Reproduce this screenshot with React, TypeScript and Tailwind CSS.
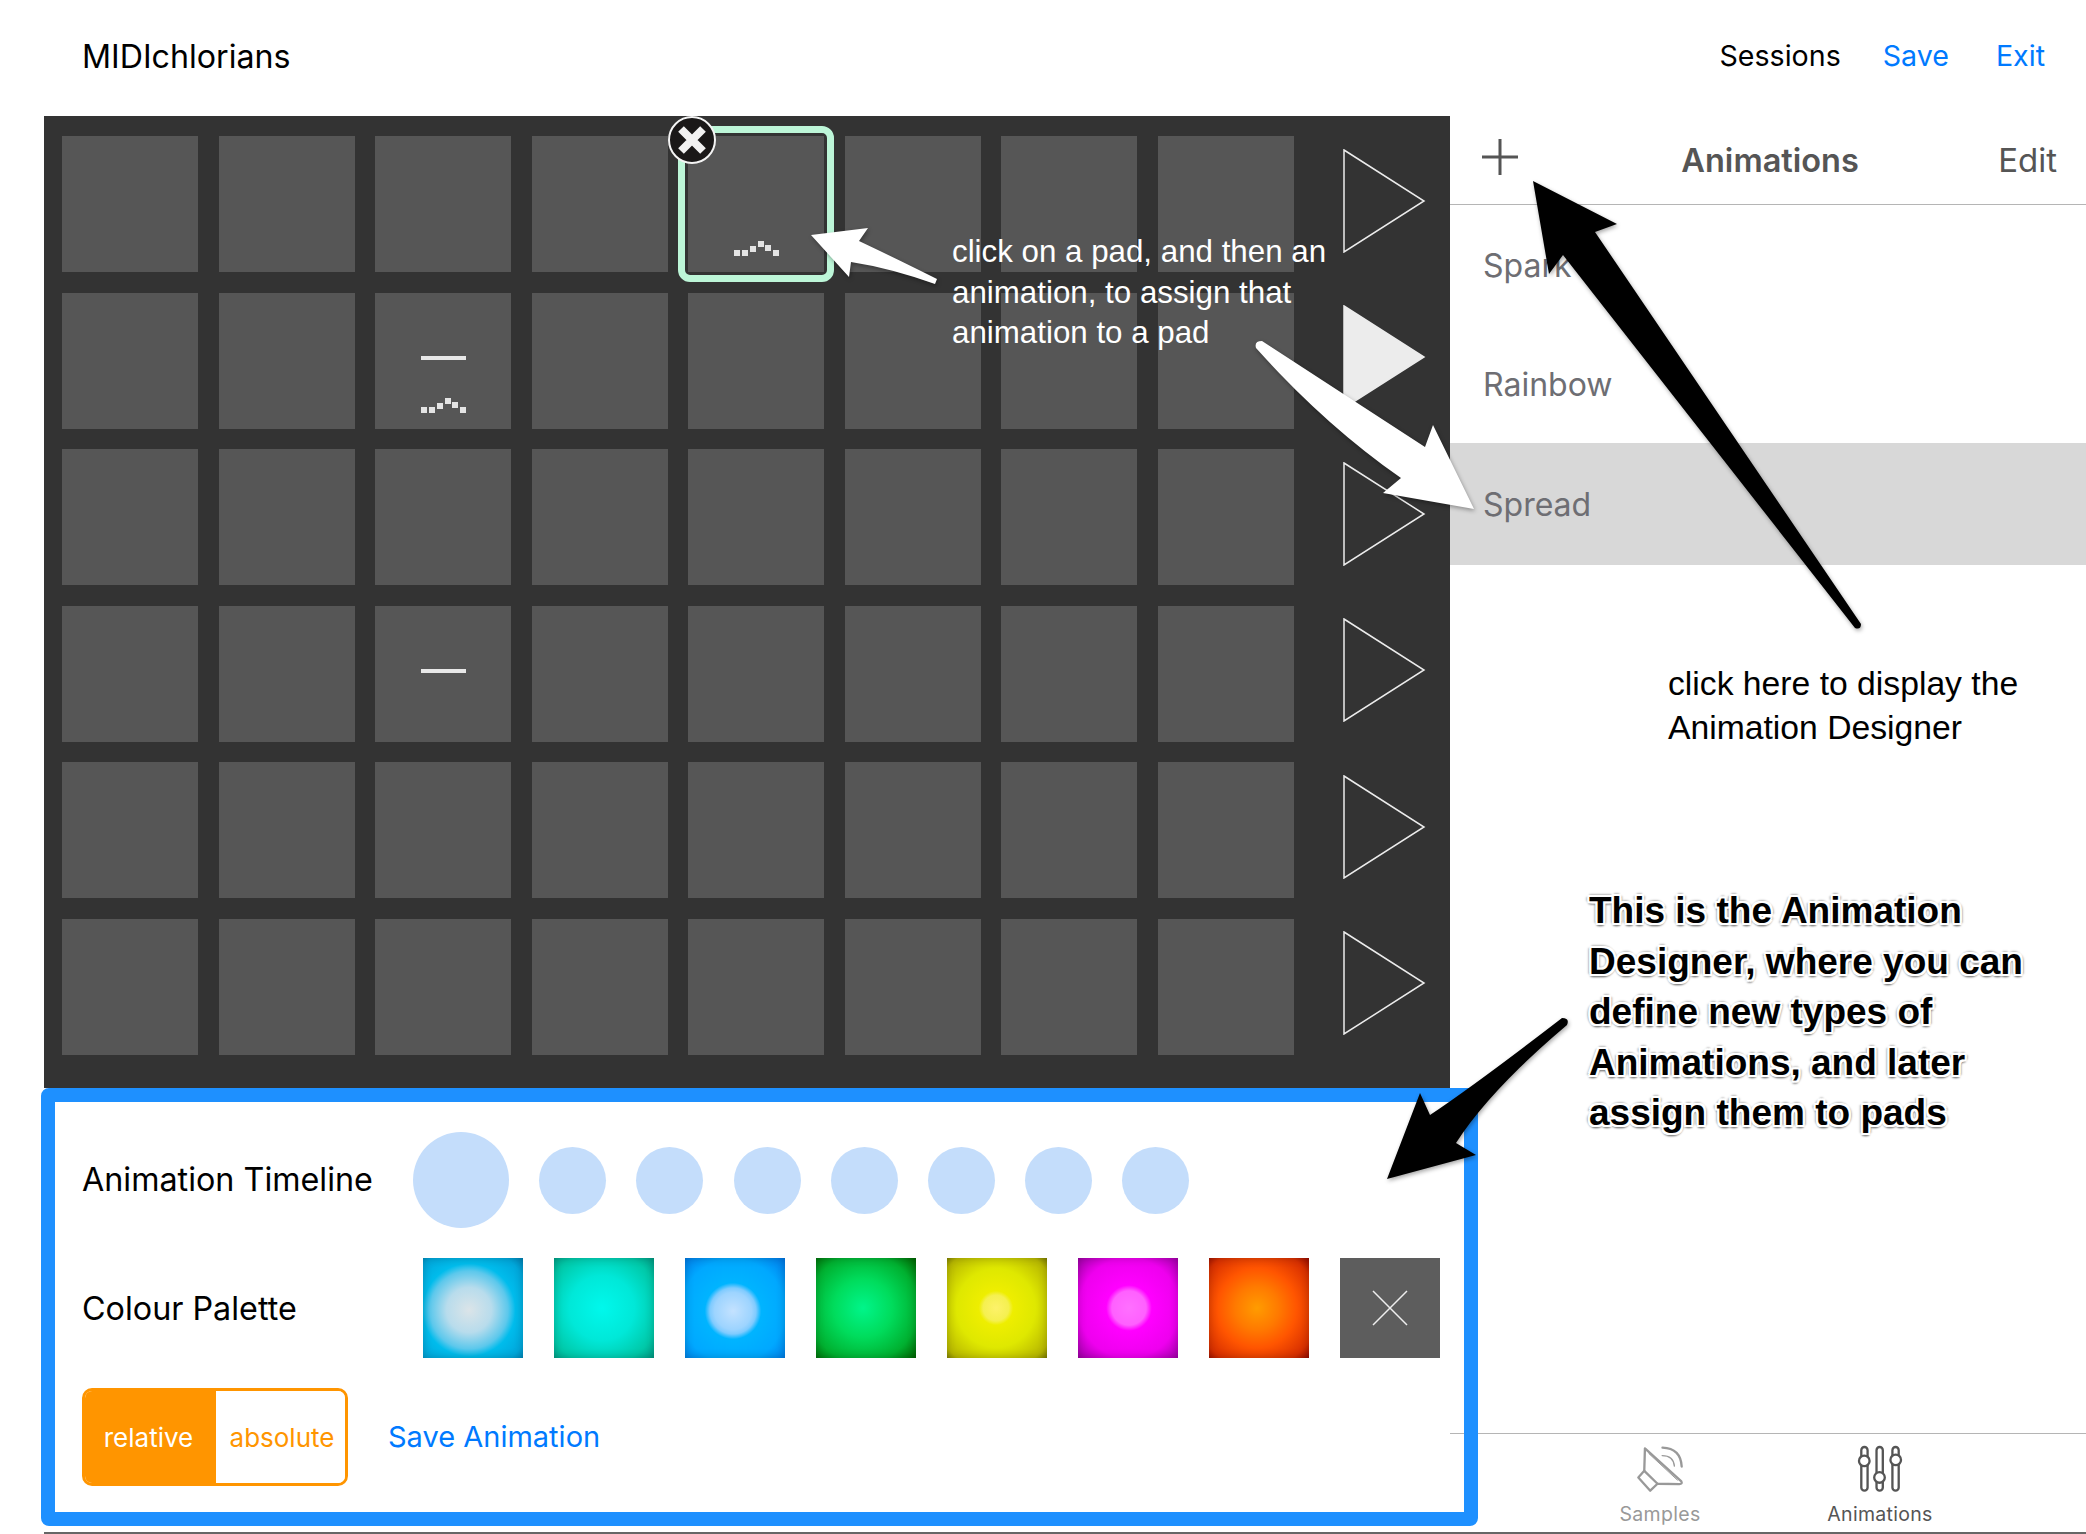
const padRows = [0, 1, 2, 3, 4, 5]
const padCols = [0, 1, 2, 3, 4, 5, 6, 7]

const swatches = [
  "bg-[radial-gradient(circle_at_46%_52%,#dbe4e8_0%,#b8dcec_30%,#5cc8ec_52%,#00bcec_62%,#00a8dc_85%,#0084b8_100%)]",
  "bg-[radial-gradient(circle_at_48%_50%,#00f8ec_0%,#00e8d8_45%,#00c8a8_80%,#009c84_100%)]",
  "bg-[radial-gradient(circle_at_48%_53%,#c4e2ff_0%,#9dd4ff_25%,#7fcbff_31%,#00b4ff_38%,#00a8ff_70%,#0078e8_100%)]",
  "bg-[radial-gradient(circle_at_47%_50%,#00f58a_0%,#00dc5c_40%,#00b030_75%,#006400_100%)]",
  "bg-[radial-gradient(circle_at_49%_50%,#fdf26a_0%,#f5f050_18%,#eeee00_24%,#dfe800_55%,#b8b800_88%,#808000_100%)]",
  "bg-[radial-gradient(circle_at_51%_50%,#ff70ff_0%,#ff60ff_24%,#ff00ff_32%,#ee00ee_70%,#a000a8_100%)]",
  "bg-[radial-gradient(circle_at_48%_50%,#ff9c00_0%,#ff7a00_30%,#ff5500_55%,#d83000_85%,#980c00_100%)]",
]

function Wave() {
  const dots = [
    [0, 9],
    [8, 9],
    [16, 5],
    [24, 0],
    [31, 4],
    [39, 9],
  ]
  return (
    <svg className="absolute left-[46px] top-[105px]" width="45" height="15" viewBox="0 0 45 15">
      {dots.map(([x, y]) => (
        <rect key={x} x={x} y={y} width="6" height="6" fill="#e4e4e4" />
      ))}
    </svg>
  )
}

function Pad({ row, col }: { row: number; col: number }) {
  const selected = row === 0 && col === 4
  const wave = selected || (row === 1 && col === 2)
  const line = col === 2 && (row === 1 || row === 3)
  return (
    <div className="relative h-[136px] w-[136px] bg-[#565656]">
      {line && <div className="absolute left-[46px] top-[63px] h-[4px] w-[45px] bg-[#e8e8e8]" />}
      {wave && <Wave />}
      {selected && (
        <>
          <div className="absolute -inset-[10px] rounded-[12px] border-[7px] border-[#bdf6d8]" />
          <svg className="absolute -left-[20px] -top-[20px]" width="48" height="48" viewBox="0 0 48 48">
            <circle cx="24" cy="24" r="23" fill="#1a1818" stroke="#f4f4f4" strokeWidth="2" />
            <path d="M13 13 L35 35 M35 13 L13 35" stroke="#f2f2f2" strokeWidth="8" />
          </svg>
        </>
      )}
    </div>
  )
}

function Trigger({ filled }: { filled: boolean }) {
  return (
    <svg className="mb-[7px] ml-[29px] self-center" width="83" height="104" viewBox="0 0 83 104">
      <path
        d="M1 1 L81 52 L1 103 Z"
        fill={filled ? "#ececec" : "none"}
        stroke="#ececec"
        strokeWidth="1.5"
      />
    </svg>
  )
}

function SamplesIcon() {
  return (
    <svg width="48" height="48" viewBox="45 40 145 145" fill="none" stroke="#999" strokeWidth="7" strokeLinejoin="round" strokeLinecap="round">
      <path d="M72 50 L182 150 Q186 158 176 158 L110 157 L70 118 Z" />
      <path d="M70 118 L52 138 L88 178 L110 157" />
      <path d="M84 66 L170 146" strokeWidth="3" />
      <path d="M125 48 Q180 50 183 105" />
      <path d="M124 72 Q158 72 161 104" strokeWidth="4" />
    </svg>
  )
}

function SlidersIcon() {
  return (
    <svg width="48" height="48" viewBox="705 40 145 145" fill="none" stroke="#555" strokeWidth="7">
      <rect x="721" y="46" width="19" height="132" rx="9.5" />
      <rect x="767" y="46" width="19" height="132" rx="9.5" />
      <rect x="815" y="46" width="19" height="132" rx="9.5" />
      <circle cx="730" cy="88" r="16" fill="#fff" />
      <circle cx="776" cy="138" r="16" fill="#fff" />
      <circle cx="825" cy="85" r="16" fill="#fff" />
    </svg>
  )
}

function Designer() {
  return (
    <div className="relative z-10 -ml-[3px] h-[438px] w-[1437px] rounded-[8px] border-[14px] border-[#1e90ff] pl-[27px] pt-[30px] font-['Inter',sans-serif]">
      <div className="flex h-[96px] items-center">
        <div className="w-[331px] pt-[1px] text-[32.3px] text-black">Animation Timeline</div>
        <div className="flex items-center gap-[30.2px]">
          <div className="h-[96px] w-[96px] rounded-full bg-[#c4ddfb]" />
          {[0, 1, 2, 3, 4, 5, 6].map((i) => (
            <div key={i} className="h-[67px] w-[67px] rounded-full bg-[#c4ddfb]" />
          ))}
        </div>
      </div>
      <div className="mt-[30px] flex h-[100px] items-center">
        <div className="w-[341px] pt-[2px] text-[32.3px] text-black">Colour Palette</div>
        <div className="flex gap-[31px]">
          {swatches.map((s) => (
            <div key={s} className={`h-[100px] w-[100px] shadow-[inset_0_0_10px_rgba(0,0,0,0.2)] ${s}`} />
          ))}
          <div className="flex h-[100px] w-[100px] items-center justify-center bg-[#5d5d5d]">
            <svg width="36" height="36" viewBox="0 0 36 36">
              <path d="M1 1 L35 35 M35 1 L1 35" stroke="#eee" strokeWidth="1.5" />
            </svg>
          </div>
        </div>
      </div>
      <div className="mt-[30px] flex items-center">
        <div className="flex h-[98px] w-[266px] overflow-hidden rounded-[10px] border-[3px] border-[#ff9500] text-[26px]">
          <div className="flex w-[131px] items-center justify-center bg-[#ff9500] pr-[4px] text-white">relative</div>
          <div className="flex flex-1 items-center justify-center bg-white pl-[3px] text-[#ff9500]">absolute</div>
        </div>
        <div className="ml-[40px] text-[29px] text-[#007aff]">Save Animation</div>
      </div>
    </div>
  )
}

function Sidebar() {
  return (
    <div className="flex flex-1 flex-col font-['Inter',sans-serif]">
      <div className="flex h-[89px] shrink-0 items-center justify-between border-b border-[#b5b5b5] pl-[32px] pr-[29px] pt-[2px] text-[33px] text-[#555]">
        <svg className="-mt-[9px]" width="36" height="36" viewBox="0 0 36 36">
          <path d="M18 0 V36 M0 18 H36" stroke="#555" strokeWidth="3" />
        </svg>
        <span className="ml-[24px] text-[32.5px] font-semibold">Animations</span>
        <span>Edit</span>
      </div>
      <div className="flex h-[119px] items-center pl-[33px] pt-[2px] text-[32px] text-[#6e6e73]">Spark</div>
      <div className="flex h-[119px] items-center pl-[33px] pt-[2px] text-[32px] text-[#6e6e73]">Rainbow</div>
      <div className="flex h-[122px] items-center bg-[#d8d8d8] pl-[33px] pt-[2px] text-[32px] text-[#6e6e73]">Spread</div>
      <div className="mt-auto flex h-[99px] justify-center border-t border-[#b5b5b5] pl-[4px] pt-[11px]">
        <div className="flex w-[220px] flex-col items-center text-[19.5px] tracking-[0.3px] text-[#999]">
          <SamplesIcon />
          <span className="mt-[7px]">Samples</span>
        </div>
        <div className="flex w-[220px] flex-col items-center text-[19.5px] tracking-[0.3px] text-[#555]">
          <SlidersIcon />
          <span className="mt-[7px]">Animations</span>
        </div>
      </div>
    </div>
  )
}

function Annotations() {
  return (
    <>
      <svg
        className="pointer-events-none absolute left-0 top-0 z-20"
        width="2086"
        height="1534"
        viewBox="0 0 2086 1534"
      >
        <g className="drop-shadow-[1px_2px_2px_rgba(0,0,0,0.35)]">
          <path
            d="M811 235 L868 228 L859 241 Q895 258 937 279 L935 284 Q890 268 851 262 L849 277 Z"
            fill="#fff"
          />
          <path
            d="M1474 509 L1433 425 L1425 447 Q1345 395 1262 341 Q1254 341 1256 348 Q1325 425 1401 478 L1383 493 Z"
            fill="#fff"
          />
          <path
            d="M1533 181 L1617 224 L1595 232 L1861 624 Q1861 630 1855 628 L1563 255 L1549 274 Z"
            fill="#000"
          />
          <path
            d="M1387 1179 L1420 1093 L1430 1115 Q1475 1085 1562 1018 Q1570 1018 1567 1025 Q1490 1090 1456 1143 L1476 1155 Z"
            fill="#000"
          />
        </g>
      </svg>
      <div className="absolute left-[952px] top-[232px] z-20 font-['Liberation_Sans',sans-serif] text-[31.3px] leading-[40.5px] text-white">
        click on a pad, and then an
        <br />
        animation, to assign that
        <br />
        animation to a pad
      </div>
      <div className="absolute left-[1668px] top-[661px] z-20 font-['Liberation_Sans',sans-serif] text-[33.7px] leading-[44px] text-black">
        click here to display the
        <br />
        Animation Designer
      </div>
      <div className="absolute left-[1589px] top-[886px] z-20 font-['Liberation_Sans',sans-serif] text-[37px] font-bold leading-[50.6px] text-black [text-shadow:2px_0_0_#fff,-2px_0_0_#fff,0_2px_0_#fff,0_-2px_0_#fff,2px_2px_0_#fff,-2px_2px_0_#fff,2px_-2px_0_#fff,-2px_-2px_0_#fff,1px_3px_2px_#888,-1px_3px_2px_#888,3px_0_2px_#aaa,-3px_0_2px_#aaa,0_-3px_2px_#bbb]">
        This is the Animation
        <br />
        Designer, where you can
        <br />
        define new types of
        <br />
        Animations, and later
        <br />
        assign them to pads
      </div>
    </>
  )
}

export default function App() {
  return (
    <div className="relative flex h-[1534px] w-[2086px] flex-col overflow-hidden bg-white font-['Inter',sans-serif]">
      <header className="flex h-[116px] shrink-0 items-center justify-between pb-[3px] pl-[82px] pr-[41px] text-[32.2px]">
        <span className="mt-[2px] text-black">MIDIchlorians</span>
        <div className="flex text-[28.6px]">
          <span className="text-black">Sessions</span>
          <span className="ml-[42px] text-[#007aff]">Save</span>
          <span className="ml-[47px] text-[#007aff]">Exit</span>
        </div>
      </header>
      <div className="flex flex-1">
        <div className="ml-[44px] w-[1406px] shrink-0">
          <div className="h-[972px] bg-[#333] pl-[18px] pt-[20px]">
            <div className="grid grid-cols-[repeat(8,136px)_112px] gap-[20.5px]">
              {padRows.map((row) => (
                <div key={row} className="contents">
                  {padCols.map((col) => (
                    <Pad key={col} row={row} col={col} />
                  ))}
                  <Trigger filled={row === 1} />
                </div>
              ))}
            </div>
          </div>
          <Designer />
        </div>
        <Sidebar />
      </div>
      <div className="ml-[44px] h-[2px] shrink-0 bg-[#666]" />
      <Annotations />
    </div>
  )
}
